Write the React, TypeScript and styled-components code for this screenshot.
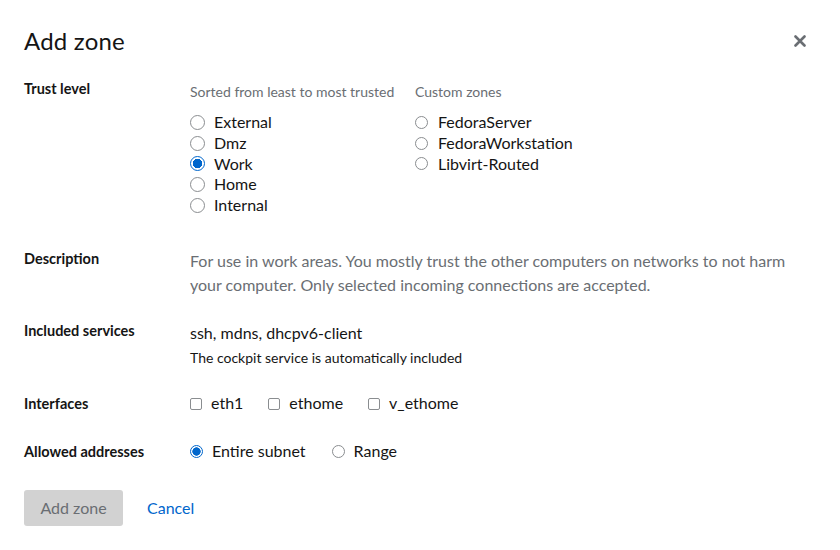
import React, { useState } from "react";
import styled, { createGlobalStyle } from "styled-components";

const GlobalStyle = createGlobalStyle`
  body {
    margin: 0;
    background: #fff;
    font-family: "Lato", "Liberation Sans", sans-serif;
    color: #151515;
  }
`;

const Modal = styled.div`
  width: 840px;
  height: 550px;
  box-sizing: border-box;
  padding: 26px 24px 0 24px;
  background: #fff;
`;

const Header = styled.div`
  display: flex;
  align-items: center;
  justify-content: space-between;
  height: 29px;
`;

const Title = styled.h1`
  margin: 0;
  font-size: 24px;
  font-weight: 400;
  line-height: 29px;
  letter-spacing: 0.2px;
`;

const CloseButton = styled.button`
  border: none;
  background: none;
  padding: 0;
  margin-right: 10px;
  width: 12px;
  height: 12px;
  display: flex;
  cursor: pointer;
`;

const Form = styled.div`
  display: grid;
  grid-template-columns: 166px 1fr;
  row-gap: 24px;
  margin-top: 24px;
`;

const Label = styled.div<{ $offset?: number }>`
  font-size: 14.5px;
  font-weight: 700;
  line-height: 20px;
  padding-top: ${(p) => p.$offset ?? 0}px;
`;

const Field = styled.div<{ $offset?: number; $bottom?: number }>`
  padding-top: ${(p) => p.$offset ?? 0}px;
  padding-bottom: ${(p) => p.$bottom ?? 0}px;
`;

const ZoneColumns = styled.div`
  display: grid;
  grid-template-columns: 225px auto;
`;

const Helper = styled.div`
  font-size: 14px;
  line-height: 20px;
  color: #6a6e73;
`;

const SmallNote = styled.div`
  font-size: 14px;
  line-height: 20px;
  margin-top: 3px;
  color: #151515;
`;

const ZoneList = styled.div`
  display: flex;
  flex-direction: column;
  margin-top: 10px;
`;

const Option = styled.label<{ $gap: number }>`
  display: flex;
  align-items: center;
  gap: ${(p) => p.$gap}px;
  font-size: 16px;
  line-height: 20.75px;
  cursor: pointer;
`;

const Radio = styled.span<{ $size: number; $checked: boolean }>`
  box-sizing: border-box;
  width: ${(p) => p.$size}px;
  height: ${(p) => p.$size}px;
  border-radius: 50%;
  flex: none;
  border: 1px solid ${(p) => (p.$checked ? "#0066cc" : "#8a8d90")};
  background: ${(p) =>
    p.$checked
      ? `radial-gradient(circle, #0066cc 0, #0066cc ${p.$size * 0.3}px, #fff ${p.$size * 0.3 + 0.5}px)`
      : "#fff"};
`;

const Checkbox = styled.span`
  box-sizing: border-box;
  width: 12px;
  height: 12px;
  border: 1px solid #8a8d90;
  border-radius: 2px;
  flex: none;
  background: #fff;
`;

const Description = styled.div`
  font-size: 16px;
  line-height: 24px;
  color: #6a6e73;
  max-width: 600px;
`;

const Services = styled.div`
  font-size: 16px;
  line-height: 24px;
`;

const Inline = styled.div<{ $gap: number }>`
  display: flex;
  align-items: center;
  gap: ${(p) => p.$gap}px;
  height: 24px;
`;

const Footer = styled.div`
  display: flex;
  align-items: center;
  gap: 24px;
  margin-top: 26px;
`;

const PrimaryButton = styled.button`
  font-family: inherit;
  font-size: 16px;
  line-height: 24px;
  padding: 6px 16px;
  width: 99px;
  border: none;
  border-radius: 3px;
  background: #d2d2d2;
  color: #6a6e73;
`;

const LinkButton = styled.button`
  font-family: inherit;
  font-size: 16px;
  line-height: 24px;
  padding: 6px 0;
  border: none;
  background: none;
  color: #0066cc;
  cursor: pointer;
`;

const builtIn = ["External", "Dmz", "Work", "Home", "Internal"];
const custom = ["FedoraServer", "FedoraWorkstation", "Libvirt-Routed"];
const interfaces = ["eth1", "ethome", "v_ethome"];

export default function App() {
  const [zone, setZone] = useState("Work");
  const [range, setRange] = useState("Entire subnet");

  return (
    <>
      <GlobalStyle />
      <Modal>
        <Header>
          <Title>Add zone</Title>
          <CloseButton aria-label="Close">
            <svg width="12" height="12" viewBox="0 0 12 12">
              <path d="M1.5 1.5 L10.5 10.5 M10.5 1.5 L1.5 10.5" stroke="#6a6e73" strokeWidth="2.6" strokeLinecap="round" />
            </svg>
          </CloseButton>
        </Header>

        <Form>
          <Label>Trust level</Label>
          <Field $offset={3} $bottom={9}>
            <ZoneColumns>
              <div>
                <Helper>Sorted from least to most trusted</Helper>
                <ZoneList>
                  {builtIn.map((z) => (
                    <Option key={z} $gap={9} onClick={() => setZone(z)}>
                      <Radio $size={15} $checked={zone === z} />
                      {z}
                    </Option>
                  ))}
                </ZoneList>
              </div>
              <div>
                <Helper>Custom zones</Helper>
                <ZoneList>
                  {custom.map((z) => (
                    <Option key={z} $gap={10} onClick={() => setZone(z)}>
                      <Radio $size={13} $checked={zone === z} />
                      {z}
                    </Option>
                  ))}
                </ZoneList>
              </div>
            </ZoneColumns>
          </Field>

          <Label>Description</Label>
          <Description>
            For use in work areas. You mostly trust the other computers on networks to not harm your
            computer. Only selected incoming connections are accepted.
          </Description>

          <Label>Included services</Label>
          <Field>
            <Services>ssh, mdns, dhcpv6-client</Services>
            <SmallNote>The cockpit service is automatically included</SmallNote>
          </Field>

          <Label $offset={2}>Interfaces</Label>
          <Inline $gap={25}>
            {interfaces.map((i) => (
              <Option key={i} $gap={9}>
                <Checkbox />
                {i}
              </Option>
            ))}
          </Inline>

          <Label $offset={2}>Allowed addresses</Label>
          <Inline $gap={26}>
            {["Entire subnet", "Range"].map((r) => (
              <Option key={r} $gap={9} onClick={() => setRange(r)}>
                <Radio $size={13} $checked={range === r} />
                {r}
              </Option>
            ))}
          </Inline>
        </Form>

        <Footer>
          <PrimaryButton disabled>Add zone</PrimaryButton>
          <LinkButton>Cancel</LinkButton>
        </Footer>
      </Modal>
    </>
  );
}
